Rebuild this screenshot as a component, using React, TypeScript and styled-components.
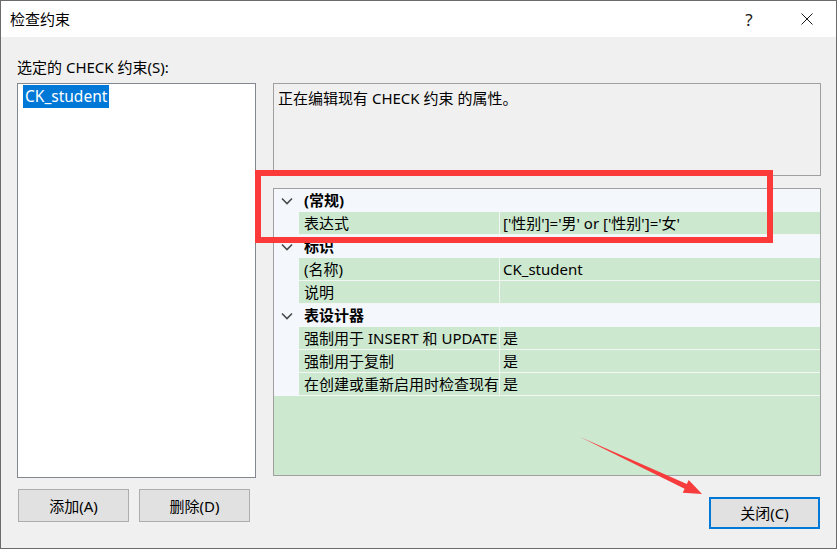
import React from "react";
import styled, { createGlobalStyle } from "styled-components";

const Global = createGlobalStyle`
  html, body { margin: 0; padding: 0; background: #f0f0f0; }
  * { box-sizing: border-box; }
  body { font-family: "Noto Sans", "Noto Sans CJK SC", sans-serif; font-size: 15px; color: #000; }
`;

const Stage = styled.div`
  position: relative;
  width: 837px;
  height: 549px;
  overflow: hidden;
`;

const Window = styled.div`
  width: 837px;
  height: 549px;
  border: 1px solid #6b6b6b;
  background: #f0f0f0;
  display: flex;
  flex-direction: column;
`;

const TitleBar = styled.div`
  height: 36px;
  background: #ffffff;
  display: flex;
  align-items: center;
  padding-left: 9px;
  flex-shrink: 0;
`;

const TitleText = styled.div`
  flex: 1;
  font-size: 15px;
  line-height: 20px;
`;

const CaptionButton = styled.div`
  width: 58px;
  height: 36px;
  display: flex;
  align-items: center;
  justify-content: center;
  font-size: 17px;
  color: #1a1a1a;
  font-family: "Noto Sans", sans-serif;
`;

const Body = styled.div`
  flex: 1;
  display: grid;
  grid-template-columns: 239px 548px;
  grid-template-rows: 20px auto;
  column-gap: 17px;
  row-gap: 6px;
  padding: 20px 0 0 16px;
  align-content: start;
`;

const FieldLabel = styled.div`
  grid-column: 1;
  line-height: 20px;
  white-space: nowrap;
`;

const Column = styled.div`
  display: flex;
  flex-direction: column;
`;

const ListBox = styled.div`
  height: 395px;
  border: 1px solid #828790;
  background: #ffffff;
  padding: 1px 5px;
`;

const ListItem = styled.div<{ $selected?: boolean }>`
  display: inline-block;
  height: 23px;
  line-height: 23px;
  padding: 0 2px;
  font-size: 15.5px;
  background: ${(p) => (p.$selected ? "#0078d7" : "transparent")};
  color: ${(p) => (p.$selected ? "#ffffff" : "#000")};
`;

const ButtonRow = styled.div<{ $end?: boolean }>`
  display: flex;
  gap: 10px;
  margin-top: ${(p) => (p.$end ? "21px" : "11px")};
  justify-content: ${(p) => (p.$end ? "flex-end" : "flex-start")};
  padding-left: ${(p) => (p.$end ? "0" : "1px")};
  padding-right: ${(p) => (p.$end ? "1px" : "0")};
`;

const Button = styled.div<{ $default?: boolean }>`
  width: 111px;
  height: ${(p) => (p.$default ? "32px" : "33px")};
  border: ${(p) => (p.$default ? "2px solid #0078d7" : "1px solid #adadad")};
  background: #e1e1e1;
  display: flex;
  align-items: center;
  justify-content: center;
  line-height: 20px;
`;

const DescBox = styled.div`
  height: 93px;
  border: 1px solid #a0a0a0;
  background: #f0f0f0;
  padding: 4px 4px;
  line-height: 20px;
`;

const PropGrid = styled.div`
  margin-top: 12px;
  height: 288px;
  border: 1px solid #a0a0a0;
  background: #cce8cf;
  display: flex;
  flex-direction: column;
  overflow: hidden;
`;

const CategoryRow = styled.div`
  height: 23px;
  display: grid;
  grid-template-columns: 25px 1fr;
  background: #f4f7fc;
  flex-shrink: 0;
`;

const Margin = styled.div`
  background: #f4f7fc;
  display: flex;
  align-items: center;
  justify-content: center;
  padding-left: 1px;
`;

const CategoryText = styled.div`
  font-weight: 700;
  line-height: 23px;
  padding-left: 5px;
`;

const PropRow = styled.div`
  height: 23px;
  display: grid;
  grid-template-columns: 25px 200px 1fr;
  flex-shrink: 0;
`;

const Cell = styled.div<{ $value?: boolean }>`
  background: #cce8cf;
  border-bottom: 1px solid #f2f7f3;
  border-left: ${(p) => (p.$value ? "1px solid #f2f7f3" : "none")};
  line-height: 22px;
  padding-left: ${(p) => (p.$value ? "3px" : "5px")};
  white-space: nowrap;
  overflow: hidden;
`;

const Overlay = styled.svg`
  position: absolute;
  top: 0;
  left: 0;
  pointer-events: none;
`;

const Chevron = () => (
  <svg width="12" height="8" viewBox="0 0 12 8">
    <path d="M1 1.5 L6 6.5 L11 1.5" fill="none" stroke="#4a4a4a" strokeWidth="1.6" />
  </svg>
);

type Prop = { label: string; value: string };
type Category = { name: string; props: Prop[] };

const categories: Category[] = [
  { name: "(常规)", props: [{ label: "表达式", value: "['性别']='男' or ['性别']='女'" }] },
  {
    name: "标识",
    props: [
      { label: "(名称)", value: "CK_student" },
      { label: "说明", value: "" },
    ],
  },
  {
    name: "表设计器",
    props: [
      { label: "强制用于 INSERT 和 UPDATE", value: "是" },
      { label: "强制用于复制", value: "是" },
      { label: "在创建或重新启用时检查现有", value: "是" },
    ],
  },
];

export default function App() {
  return (
    <Stage>
      <Global />
      <Window>
        <TitleBar>
          <TitleText>检查约束</TitleText>
          <CaptionButton>?</CaptionButton>
          <CaptionButton>
            <svg width="12" height="12" viewBox="0 0 12 12">
              <path d="M0.5 0.5 L11.5 11.5 M11.5 0.5 L0.5 11.5" stroke="#1a1a1a" strokeWidth="1" />
            </svg>
          </CaptionButton>
        </TitleBar>
        <Body>
          <FieldLabel>选定的 CHECK 约束(S):</FieldLabel>
          <div />
          <Column>
            <ListBox>
              <ListItem $selected>CK_student</ListItem>
            </ListBox>
            <ButtonRow>
              <Button>添加(A)</Button>
              <Button>删除(D)</Button>
            </ButtonRow>
          </Column>
          <Column>
            <DescBox>正在编辑现有 CHECK 约束 的属性。</DescBox>
            <PropGrid>
              {categories.map((c) => (
                <React.Fragment key={c.name}>
                  <CategoryRow>
                    <Margin>
                      <Chevron />
                    </Margin>
                    <CategoryText>{c.name}</CategoryText>
                  </CategoryRow>
                  {c.props.map((p) => (
                    <PropRow key={p.label}>
                      <Margin />
                      <Cell>{p.label}</Cell>
                      <Cell $value>{p.value}</Cell>
                    </PropRow>
                  ))}
                </React.Fragment>
              ))}
            </PropGrid>
            <ButtonRow $end>
              <Button $default>关闭(C)</Button>
            </ButtonRow>
          </Column>
        </Body>
      </Window>
      <Overlay width="837" height="549" viewBox="0 0 837 549">
        <rect x="258" y="173" width="512" height="67" fill="none" stroke="#fc3a3a" strokeWidth="6" />
        <polygon
          points="580,437 686.8,484.1 688.7,480.1 702,494 682.7,492.7 684.6,488.7"
          fill="#f63c3c"
        />
      </Overlay>
    </Stage>
  );
}
